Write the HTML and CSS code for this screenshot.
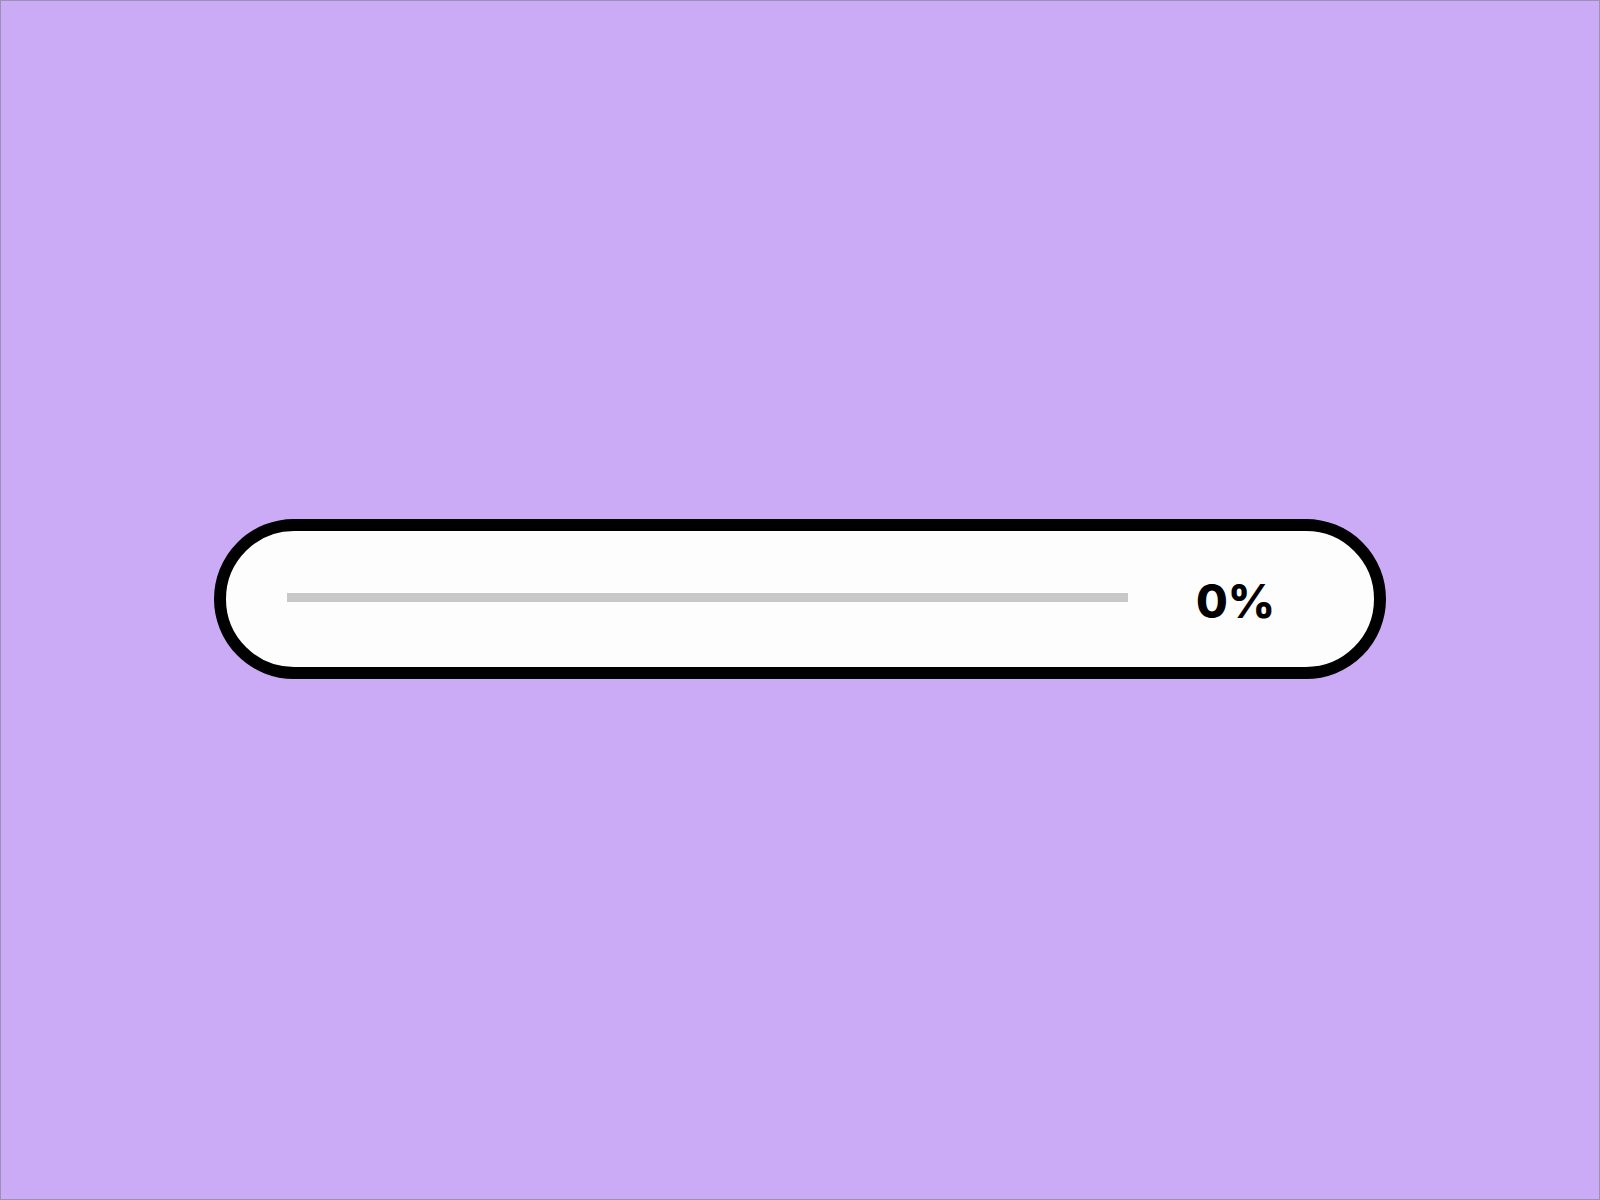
FILE: index.html
```html
<!DOCTYPE html>
<html lang="en">
<head>
<meta charset="utf-8">
<title>Progress</title>
<link rel="stylesheet" href="styles.css">
</head>
<body>
<main class="stage">
  <div class="pill">
    <div class="track"></div>
    <span class="percent">0%</span>
  </div>
</main>
</body>
</html>
```

FILE: styles.css
```css
html, body {
  margin: 0;
  padding: 0;
}
body {
  width: 1600px;
  height: 1200px;
  overflow: hidden;
}
.stage {
  box-sizing: border-box;
  width: 1600px;
  height: 1200px;
  border: 1px solid #9a90b8;
  background: #cbabf5;
  display: flex;
  align-items: center;
  justify-content: center;
}
.pill {
  box-sizing: border-box;
  width: 1172px;
  height: 160px;
  margin-top: -2px;
  border: 12px solid #000;
  border-radius: 80px;
  background: #fdfdfd;
  display: flex;
  align-items: center;
  padding: 0 108px 0 61px;
  gap: 68px;
}
.track {
  flex: 1;
  height: 9px;
  background: #c8c8c8;
  margin-top: -3px;
}
.percent {
  width: 70px;
  flex: none;
  font-family: Inter, "Liberation Sans", sans-serif;
  font-weight: 800;
  font-size: 46px;
  line-height: 1;
  color: #000;
  margin-top: 4px;
  white-space: nowrap;
}
```
